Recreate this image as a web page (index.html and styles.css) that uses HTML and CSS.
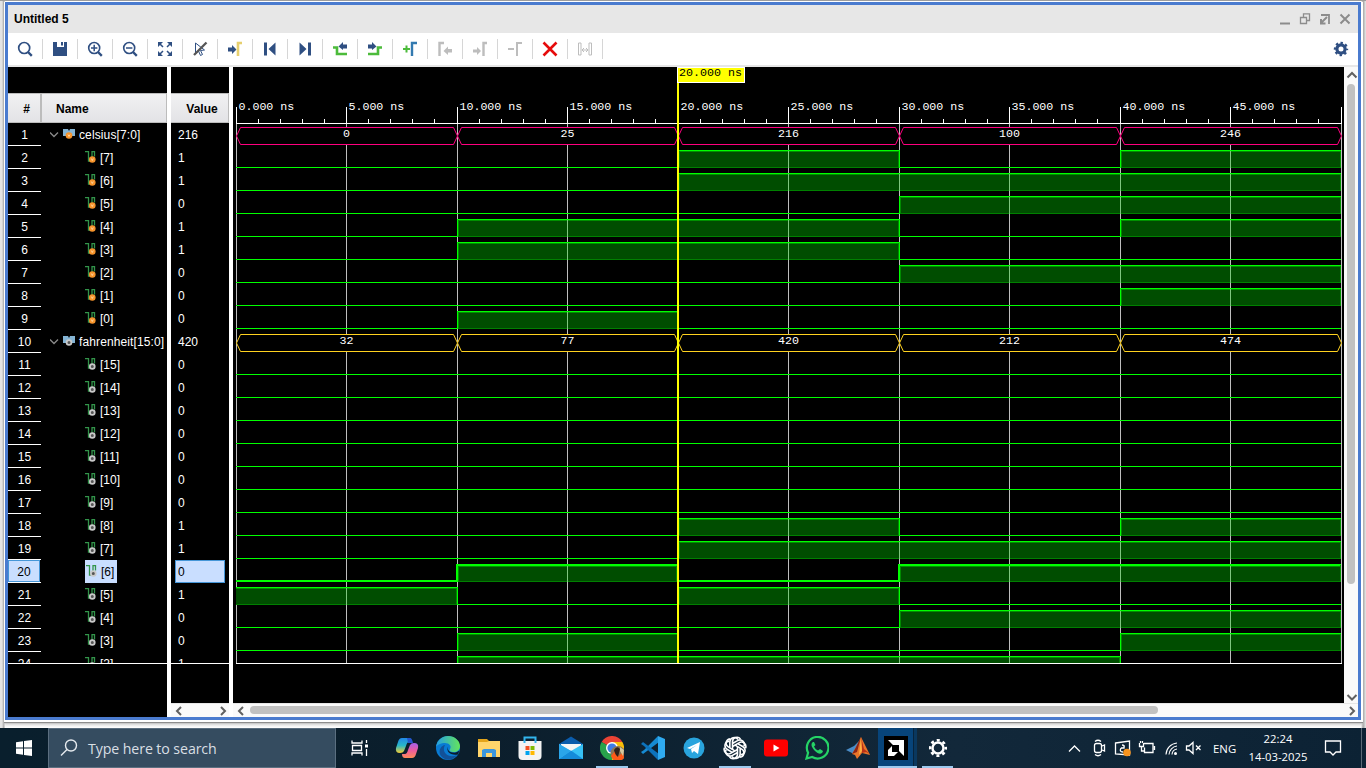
FILE: index.html
```html
<!DOCTYPE html>
<html lang="en">
<head>
<meta charset="utf-8">
<title>Untitled 5</title>
<link rel="stylesheet" href="styles.css">
</head>
<body>
<div class="desktop">
<div class="shell">
<main class="window">
  <header class="titlebar">
    <span class="title">Untitled 5</span>
    <svg class="winbtns" width="73" height="16" fill="none" stroke="#8c8c8c" stroke-width="1.6">
      <path d="M1 12.500h10" stroke-width="2"/>
      <path d="M21.500 6.500h6v6h-6zM24.500 6v-3.200h6v6.700h-3" stroke-width="1.300"/>
      <path d="M42 4h8v9" stroke-width="1.800"/><path d="M48 6l-5.500 5.500M42 8v4.500h4.500" stroke-width="2"/>
      <path d="M61.500 3.500l9 9M70.500 3.500l-9 9" stroke-width="2"/>
    </svg>
  </header>
  <nav class="toolbar">
    <span class="tool"><svg viewBox="0 0 16 16" fill="none" stroke="#2f4f82"><circle cx="7.200" cy="7" r="5.500" stroke-width="1.700"/><path d="M11 11l3.800 3.800" stroke-width="2.400"/></svg></span>
    <span class="tool"><svg viewBox="0 0 16 16" fill="#2f4f82"><path d="M1 1h4v5h7V1h3v14H1zM9 1h2v3.500H9z"/></svg></span>
    <span class="tool"><svg viewBox="0 0 16 16" fill="none" stroke="#2f4f82"><circle cx="7.200" cy="7" r="5.500" stroke-width="1.600"/><path d="M11 11l3.800 3.800" stroke-width="2.400"/><path d="M4 7h6.400M7.200 3.800v6.400" stroke-width="1.500"/></svg></span>
    <span class="tool"><svg viewBox="0 0 16 16" fill="none" stroke="#2f4f82"><circle cx="7.200" cy="7" r="5.500" stroke-width="1.600"/><path d="M11 11l3.800 3.800" stroke-width="2.400"/><path d="M4 7h6.400" stroke-width="1.500"/></svg></span>
    <span class="tool"><svg viewBox="0 0 16 16" fill="#2f4f82" stroke="#2f4f82"><path d="M2.500 2.500l3.500 3.500M13.500 2.500L10 6M2.500 13.500L6 10M13.500 13.500L10 10" stroke-width="1.500"/><path stroke="none" d="M1 1h5L1 6zM15 1h-5l5 5zM1 15h5l-5-5zM15 15h-5l5-5z"/></svg></span>
    <span class="tool"><svg viewBox="0 0 16 16" fill="none"><path d="M3.500 2v10.500l3-2.500 2 4.500 2-1-2-4 4-.5z" stroke="#2f4f82"/><path d="M14.500 1.500L2 14" stroke="#555" stroke-width="2.300"/></svg></span>
    <span class="tool"><svg viewBox="0 0 16 16"><path d="M1 6.500h4V4l4.500 4.500L5 13v-2.500H1z" fill="#2f4f82"/><path d="M15 2h-4v13" fill="none" stroke="#e6cf6e" stroke-width="2.600"/></svg></span>
    <span class="tool"><svg viewBox="0 0 16 16" fill="#2f4f82"><path d="M2 1.500h3v13H2zM13.500 1.500v13L6.500 8z"/></svg></span>
    <span class="tool"><svg viewBox="0 0 16 16" fill="#2f4f82"><path d="M11 1.500h3v13h-3zM2.500 1.500v13L9.500 8z"/></svg></span>
    <span class="tool"><svg viewBox="0 0 16 16"><path d="M1 6.500h4V13h10" fill="none" stroke="#4cbb3b" stroke-width="2.600"/><path d="M15 3.500h-4V1L6.500 5.500 11 9V7.500h4z" fill="#2f4f82"/></svg></span>
    <span class="tool"><svg viewBox="0 0 16 16"><path d="M15 6.500h-4V13H1" fill="none" stroke="#4cbb3b" stroke-width="2.600"/><path d="M1 3.500h4V1l4.500 4.500L5 9V7.500H1z" fill="#2f4f82"/></svg></span>
    <span class="tool"><svg viewBox="0 0 16 16" fill="none"><path d="M1 8h7M4.500 4.500v7" stroke="#4cbb3b" stroke-width="2"/><path d="M15 2h-5v13" stroke="#337ab0" stroke-width="2.400"/></svg></span>
    <span class="tool"><svg viewBox="0 0 16 16"><path d="M7 2H2.500v13" fill="none" stroke="#bdbdbd" stroke-width="2.400"/><path d="M15 8h-4V5.500L6.500 10l4.500 4v-2.500h4z" fill="#bdbdbd"/></svg></span>
    <span class="tool"><svg viewBox="0 0 16 16"><path d="M15 2h-3.500v13" fill="none" stroke="#bdbdbd" stroke-width="2.400"/><path d="M1 8.500h4V6l4 4-4 4v-2.500H1z" fill="#bdbdbd"/></svg></span>
    <span class="tool"><svg viewBox="0 0 16 16" fill="none" stroke="#bdbdbd" stroke-width="2"><path d="M1 8h6M15 2h-5v13"/></svg></span>
    <span class="tool"><svg viewBox="0 0 16 16" stroke="#e60b0b" stroke-width="2.600"><path d="M1.500 1.500l13 13M14.500 1.500l-13 13"/></svg></span>
    <span class="tool"><svg viewBox="0 0 16 16" fill="none" stroke="#bdbdbd"><path d="M1.500 2h2.500v12H1.500zM12 2h2.500v12H12zM5 9h6M7 7L5 9l2 2M9 7l2 2-2 2"/></svg></span>
    <svg class="gear" viewBox="0 0 16 16" fill="none" stroke="#2f4f82"><circle cx="8" cy="8" r="4.100" stroke-width="3.200"/><circle cx="8" cy="8" r="6" stroke-width="2.400" stroke-dasharray="2.350 2.360" stroke-dashoffset="1.200"/></svg>
  </nav>
  <section class="viewer">
    <div class="panel names">
      <div class="spacer"></div>
      <div class="heads"><b class="head idx">#</b><b class="head name">Name</b></div>
      <div class="rows" id="nameRows"></div>
    </div>
    <div class="panel values">
      <div class="spacer"></div>
      <div class="heads"><b class="head val">Value</b></div>
      <div class="rows" id="valueRows"></div>
      <div class="hbar"><svg width="58" height="13" fill="none" stroke="#606060" stroke-width="2"><path d="M10 3L6 7l4 4M50 3l4 4-4 4"/></svg></div>
    </div>
    <div class="wavecol">
      <svg class="wave" id="wave" width="1111" height="636" viewBox="233 67 1111 636"></svg>
      <div class="hbar"><svg width="1125" height="13"><rect x="17" y="2" width="908" height="8" rx="4" fill="#c1c1c1"/><path d="M10 3L6 7l4 4M1117 3l4 4-4 4" fill="none" stroke="#606060" stroke-width="2"/></svg></div>
    </div>
    <div class="vbar"><svg width="14" height="636"><rect x="3" y="17" width="8" height="500" rx="4" fill="#c1c1c1"/><path d="M3.500 10.500l4.500-4.500 4.500 4.500M3.500 628l4.500 4.500 4.500-4.500" fill="none" stroke="#606060" stroke-width="2"/></svg></div>
  </section>
</main>
</div>
<footer class="taskbar">
  <span class="start"><svg width="16" height="16" fill="#fff"><path d="M0 2.200L7 1.200V7.500H0zM8 1L16 0v7.500H8zM0 8.500h7v6.300L0 13.800zM8 8.500h8V16l-8-1z"/></svg></span>
  <div class="search"><svg width="18" height="18" fill="none" stroke="#e6eaee" stroke-width="1.400"><circle cx="11" cy="6.500" r="5.500"/><path d="M7 10.500L1 16.500"/></svg><span>Type here to search</span></div>
  <div class="apps">
    <span class="app taskview"><svg viewBox="0 0 24 24" fill="none" stroke="#fff" stroke-width="1.300"><path d="M4 4.500V7h10V4.500M4 19.500V17h10v2.500M4.500 9.500h9v5h-9zM18.500 4v3M18.500 13v7"/><path d="M17 8.500h3v3h-3z" fill="#fff" stroke="none"/></svg></span>
    <span class="app"><svg viewBox="0 0 24 24"><defs><linearGradient id="cpa" x2="0" y2="1"><stop stop-color="#2187e8"/><stop offset=".5" stop-color="#28b6c8"/><stop offset="1" stop-color="#f5ce32"/></linearGradient><linearGradient id="cpb" x2="0" y2="1"><stop stop-color="#a560ed"/><stop offset=".5" stop-color="#ec5b9d"/><stop offset="1" stop-color="#ff8a56"/></linearGradient></defs><path d="M7 2h7q2 0 3 4h-3q-2 0-3 4l-2 5q-1 2-4 2-5 0-4-5l2-6q1-4 4-4z" fill="url(#cpa)"/><path d="M12 2h3q2 0 3 5h-5z" fill="#2356ce"/><path d="M17 22h-7q-3 0-3-4h3q2 0 3-4l2-5q1-2 4-2 5 0 4 5l-2 6q-1 4-4 4z" fill="url(#cpb)"/></svg></span>
    <span class="app"><svg viewBox="0 0 24 24"><defs><linearGradient id="edg"><stop stop-color="#249ee5"/><stop offset="1" stop-color="#64e55b"/></linearGradient></defs><circle cx="12" cy="12" r="12" fill="#087bd3"/><path d="M0 11C1 4 6 0 12 0c7 0 12 5 12 10 0 4-3 6-6 6-4 0-5-1-4-3 2-3-1-6-5-6-4 0-8 2-9 4z" fill="url(#edg)"/><path d="M9 9c-4 7 3 14 12 10-4 6-12 6-16 1-3-4-1-10 4-11z" fill="#125198"/><path d="M12.500 10c-1.500 3 0 6 4 6.500 3 .5 5-.5 7-2l-1.500 4c-7 1.500-13-3-9.500-8.500z" fill="#0a1d2d"/></svg></span>
    <span class="app"><svg viewBox="0 0 24 24"><path d="M1 3h9l2 2h11v16H1z" fill="#e4a51b"/><path d="M1 6h9l2-1h11v16H1z" fill="#ffd56b"/><path d="M5 21v-7l2-1h10l2 1v7h-4v-4H9v4z" fill="#3a96dd"/></svg></span>
    <span class="app"><svg viewBox="0 0 24 24"><path d="M6.500 6V1.500h11V6" fill="none" stroke="#32b5ed" stroke-width="2"/><path d="M.5 5h23v15q0 4-4 4h-15q-4 0-4-4z" fill="#f3f3f3"/><path d="M6.500 5v2M17.500 5v2" stroke="#32b5ed" stroke-width="2"/><path d="M7.500 10h4v4h-4z" fill="#f25022"/><path d="M12.500 10h4v4h-4z" fill="#7fba00"/><path d="M7.500 15h4v4h-4z" fill="#00a4ef"/><path d="M12.500 15h4v4h-4z" fill="#ffb900"/></svg></span>
    <span class="app"><svg viewBox="0 0 24 24"><path d="M0 8L12 .5 24 8v8H0z" fill="#0b5cac"/><path d="M2 8h20v8H2z" fill="#f5f5f5"/><path d="M0 8l12 7 12-7v15H0z" fill="#37c1f5"/><path d="M0 23l12-8.500L24 23z" fill="#158bd9"/><path d="M0 8l12 7L0 23z" fill="#2aa5ea"/></svg></span>
    <span class="app open"><svg viewBox="0 0 24 24"><path d="M12 12L1.600 6A12 12 0 0 1 22.400 6z" fill="#ea4335"/><path d="M12 12L1.600 6A12 12 0 0 0 12 24l5-9z" fill="#28a34b"/><path d="M12 12V6h10.400A12 12 0 0 1 12 24z" fill="#fbbd08"/><circle cx="12" cy="12" r="6" fill="#fff"/><circle cx="12" cy="12" r="4.600" fill="#3f7be5"/><circle cx="18" cy="17.500" r="7.500" fill="#8d7554"/><path d="M11 20l4-5 4 5 4-4 1 6q-6 6-12 0z" fill="#ff5a18"/><path d="M14 14q3-5 6-1l-2 8q-3-2-4-7z" fill="#30201b"/><path d="M20 11l4 3-1 6-3-5z" fill="#d5c89e"/></svg></span>
    <span class="app"><svg viewBox="0 0 24 24"><path d="M17 0L3 14 0 16l2 2L18 6z" fill="#168bd3"/><path d="M17 24L3 10 0 8l2-2 16 12z" fill="#0d73bc"/><path d="M17 0l7 3v18l-7 3z" fill="#2faaf0"/></svg></span>
    <span class="app"><svg viewBox="0 0 24 24"><circle cx="12" cy="12" r="10.500" fill="#29a4dd"/><path d="M5 12l13-6-2 12-4-3-2 2-1-4 6-4-7 4z" fill="#fff"/></svg></span>
    <span class="app open"><svg viewBox="0 0 24 24" fill="none" stroke="#fff" stroke-width="1.600"><g id="knot"><path id="petal" d="M9.500 7.500l5-2.900a4.500 4.500 0 0 1 6.400 5.800M9.500 13.400V6a4.500 4.500 0 0 1 8-3"/><use href="#petal" transform="rotate(60 12 12)"/><use href="#petal" transform="rotate(120 12 12)"/></g><use href="#knot" transform="rotate(180 12 12)"/></svg></span>
    <span class="app"><svg viewBox="0 0 24 24"><rect y="3.500" width="24" height="17" rx="3" fill="#f00"/><path d="M9.500 8.500v7l6-3.500z" fill="#fff"/></svg></span>
    <span class="app"><svg viewBox="0 0 24 24"><path d="M1.500 22.500l1.600-5.800A10.800 10.800 0 1 1 7.200 21z" fill="none" stroke="#25d366" stroke-width="2.200"/><path d="M8 6c-3 2-1 6 2 9 3 3 7 4 8 0l-3-2-2 1.500c-2-1-3-2-4-4L10.500 9 9 6z" fill="#25d366"/></svg></span>
    <span class="app matlab"><svg viewBox="0 0 24 24"><path d="M0 14l8-4 5-5-5 13z" fill="#4a8cc7"/><path d="M15 1l-5 10-4 7 3 1 2 4 5-6 8 2z" fill="#e8752a"/><path d="M15 1l-6 12-3 5 5-2z" fill="#8d2516"/><path d="M15 1l3 12 6 5-4-2-4 1z" fill="#b93218"/><path d="M15 1l1 14-3 4z" fill="#ffb343"/></svg></span>
    <span class="app amd"><svg viewBox="0 0 24 24"><path d="M0 0h24v24H0z" fill="#000"/><path d="M4 4h16v16l-5-5V9H9zM4 14l4-4v6h6l-4 4H4z" fill="#fff"/></svg></span>
    <span class="app open settings"><svg viewBox="0 0 24 24" fill="none" stroke="#fff"><circle cx="12" cy="12" r="5.500" stroke-width="2.500"/><circle cx="12" cy="12" r="7.800" stroke-width="2.500" stroke-dasharray="3.050 3.076" stroke-dashoffset="1.500"/></svg></span>
  </div>
  <div class="tray">
    <svg width="147" height="40" fill="none" stroke="#fff" stroke-width="1.300"><path d="M3 23.500l5.500-5.500 5.500 5.500"/><path d="M28.500 17.500q0-2 2-2h3q2 0 2 2v5q0 2-2 2h-3q-2 0-2-2zM36 18l2.500-1v6L36 22M29 13.500q3-2.500 6 0M29 26.500q3 2.500 6 0"/><path d="M49.500 15l14-2v14l-14-1zM56 17q3 0 2 3m-1 4q-4 0-2-4m3-3v3h-3"/><circle cx="61" cy="24.500" r="3.800" fill="#f7931e" stroke="none"/><path d="M78 15.500h9v9h-8.500v-5M88.500 18v4M73.500 15v3.500h4V15M75.500 18.500V23h3M74.500 13v2M76.500 13v2"/><path d="M100 26.500a12 12 0 0 1 11-11.500M103 26.500a9 9 0 0 1 8-8.500M106 26.500a6 6 0 0 1 5-5.500" stroke-width="1.100"/><circle cx="109.500" cy="25.500" r="1.500" fill="#fff" stroke="none"/><path d="M120.500 18v4h2.500l4 3.500v-11L123 18zM130 17.500l4.500 4.500M134.500 17.500L130 22"/></svg>
    <span class="lang">ENG</span>
    <span class="clock"><span>22:24</span><span>14-03-2025</span></span>
    <svg class="note" width="18" height="18" fill="none" stroke="#fff" stroke-width="1.300"><path d="M1.500 2h15v11H12L9 16l-3-3H1.500z"/></svg>
    <span class="peek"></span>
  </div>
</footer>
</div>
<script src="wave.js"></script>
</body>
</html>
```

FILE: styles.css
```css
* { box-sizing: border-box; }
body { margin: 0; width: 1366px; height: 768px; overflow: hidden; font-family: "Liberation Sans", Arial, sans-serif; font-size: 12px; }
svg { display: block; flex: none; }
.desktop { display: flex; flex-direction: column; height: 768px; background: #fff; }
.shell { height: 728px; padding: 1px 3px 6px 4px; background: linear-gradient(90deg, #e4e4e4 0, #e4e4e4 2px, #a0a0a0 4px, #fff 5px, #fff 1361px, #a0a0a0 1363px, #ececec 1366px); border-top: 1px solid #9d9d9d; }
.window { display: flex; flex-direction: column; height: 720px; width: 1359px; padding: 0 1px 2px 0; background: #fff; box-shadow: 0 1px 1px #8d8d8d, 0 3px 3px #cfcfcf; }
.titlebar, .toolbar, .viewer { width: 1356px; margin-left: 1px; border: solid #4a7bcf; border-width: 0 3px; }
.titlebar { height: 31px; border-top-width: 3px; background: #e7e7e7; display: flex; align-items: center; justify-content: space-between; padding: 0 6px; }
.title { font-weight: bold; }
.toolbar { height: 34px; padding-bottom: 2px; background: linear-gradient(#fff 32px, #e7e7e7 32px); display: flex; align-items: center; }
.tool { width: 35px; height: 20px; border-right: 1px solid #d6d6d6; display: flex; align-items: center; justify-content: center; }
.tool svg, .gear { width: 16px; height: 16px; }
.gear { margin-left: auto; margin-right: 9px; }
.viewer { height: 653px; border-bottom: 3px solid #4a7bcf; display: flex; background: #fff; }
.panel { background: #000; color: #fff; display: flex; flex-direction: column; height: 650px; }
.names { width: 159px; margin-right: 4px; }
.values { width: 58px; margin-right: 4px; }
.spacer { height: 26px; }
.heads { display: flex; height: 30px; color: #000; }
.head { height: 30px; line-height: 30px; background: linear-gradient(#f1f1f2, #e3e3e6); border: solid #bcbcbc; border-width: 1px 1px 1px 0; }
.idx { width: 34px; text-align: center; padding-left: 5px; border-right-width: 2px; }
.name { width: 125px; padding-left: 14px; }
.val { width: 58px; text-align: center; padding-left: 5px; }
.rows { height: 541px; overflow: hidden; border-bottom: 1px solid #fff; }
.row { display: flex; height: 23px; line-height: 25px; }
.num { width: 33px; height: 23px; text-align: center; border-bottom: 1px solid #fff; }
.num span { display: block; height: 22px; width: 33px; }
.cell { display: flex; align-items: flex-start; white-space: nowrap; }
.bus { padding-left: 9px; letter-spacing: .12px; }
.bus svg { margin-right: 4px; }
.bit { padding: 0 3px 0 2px; margin-left: 42px; height: 23px; }
.bit svg { margin: 4px 4px 0 0; }
.value { padding-left: 7px; }
.row.sel .num span { background: #c9deff; color: #000; border: 1px solid #4596d8; line-height: 23px; width: 32px; }
.sel .bit { background: #c9deff; margin-left: 44px; padding-left: 1px; color: #000; }
.sel .bit svg { margin-right: 4px; }
.row.sel .value { margin: 0 4px; width: 50px; padding-left: 2px; background: #c9deff; color: #000; border: 1px solid #4596d8; line-height: 23px; }
.values .hbar { margin-top: auto; }
.hbar { height: 14px; background: #fafafa; border-top: 1px solid #e6e6e6; }
.wavecol { width: 1111px; }
.wavecol .hbar { width: 1125px; }
.wave { background: #000; }
.vbar { width: 14px; height: 636px; background: #fafafa; }
.mono { font-family: "Liberation Mono", monospace; font-size: 11.670px; fill: #fff; }
.stamp { fill: #000; }
.taskbar { height: 40px; display: flex; background: linear-gradient(90deg, #091f2d, #0b1e2c 35%, #12283a 70%, #0c2234); color: #fff; font-family: "Open Sans", "Noto Sans", sans-serif; }
.start { width: 48px; display: flex; align-items: center; justify-content: center; }
.search { width: 288px; border: 1px solid #5b6f80; background: #354c60; display: flex; align-items: center; gap: 10px; padding-left: 11px; font-size: 14.200px; color: #d9dfe4; letter-spacing: -.1px; }
.apps { display: flex; }
.app { width: 32px; height: 40px; margin-right: 9px; display: flex; align-items: center; justify-content: center; border-bottom: 2px solid transparent; padding-top: 2px; }
.taskview { width: 48px; margin-right: 7px; }
.app svg { width: 24px; height: 24px; }
.open { border-bottom-color: #9cc9ee; }
.matlab { margin-right: 4px; }
.amd { width: 39px; margin-right: 5px; justify-content: flex-start; padding-left: 6px; background: linear-gradient(90deg, #07447a 35px, #07243d 35px, #07243d 36px, #0a385f 36px); border-bottom-color: #9cc9ee; }
.settings { width: 31px; margin-right: 0; }
.tray { margin-left: auto; display: flex; align-items: center; }
.lang { width: 24px; font-size: 11.400px; }
.clock { width: 82px; display: flex; flex-direction: column; align-items: center; font-size: 11.300px; line-height: 18px; padding-bottom: 1px; }
.note { margin: 0 19px 0 5px; }
.peek { width: 5px; height: 40px; border-left: 1px solid #5a6a77; }
```

FILE: wave.js
```js
const edges = [236, 457, 678, 899, 1120, 1341];
const buses = [
  { name: 'celsius', width: 8, values: [0, 25, 216, 100, 246], color: '#ff007f', dot: '#f7942b' },
  { name: 'fahrenheit', width: 16, values: [32, 77, 420, 212, 474], color: '#ffd21f', dot: '#c9c9c9' }
];
const rows = [];
for (const bus of buses) {
  rows.push({ bus, label: `${bus.name}[${bus.width - 1}:0]`, value: bus.values[2] });
  for (let b = bus.width - 1; b >= 0; b--) {
    const bits = bus.values.map(v => (v >> b) & 1);
    rows.push({ bits, dot: bus.dot, label: `[${b}]`, value: bits[2] });
  }
}
const shown = rows.slice(0, 24);

const mark = (x, y, c) => c === '#f7942b'
  ? `<circle cx="${x}" cy="${y}" r="3.300" fill="${c}"/><path d="M${x - 1} ${y - 1}l1 2 1-2" fill="none" stroke="#ffe0b5" stroke-width=".8"/>`
  : `<circle cx="${x}" cy="${y}" r="2.400" fill="#555" stroke="${c}" stroke-width="1.800"/>`;
const busIcon = c => `<svg width="25" height="23"><path d="M0 9.500l4 4 4-4" fill="none" stroke="#8a8a8a" stroke-width="1.300"/><path d="M13 6h5l1 2 1-2h5v7h-3l-3 2-3-2h-3z" fill="#84b4d4"/>${mark(19, 12.500, c)}</svg>`;
const bitIcon = c => `<svg width="11" height="15"><path d="M0 1.600h3.500v9.400h3.500V1.600h2.500v5" fill="none" stroke="#32944a" stroke-width="1.300"/>${mark(7.300, 9.500, c)}</svg>`;

document.getElementById('nameRows').innerHTML = shown.map((r, i) =>
  `<div class="row${i === 19 ? ' sel' : ''}"><div class="num"><span>${i + 1}</span></div>` +
  `<div class="cell ${r.bus ? 'bus' : 'bit'}">${r.bus ? busIcon(r.bus.dot) : bitIcon(r.dot)}<span>${r.label}</span></div></div>`).join('');
document.getElementById('valueRows').innerHTML = shown.map((r, i) =>
  `<div class="row${i === 19 ? ' sel' : ''}"><div class="value">${r.value}</div></div>`).join('');

const rect = (x, y, w, h, f) => `<rect x="${x}" y="${y}" width="${w}" height="${h}" fill="${f}"/>`;
let s = '';
const majors = [236, 346, 457, 567, 678, 788, 899, 1009, 1120, 1230, 1341];
majors.forEach(x => { s += rect(x, 124, 1, 540, '#bebebe'); });
s += '<clipPath id="body"><rect x="233" y="60" width="1111" height="603"/></clipPath><g clip-path="url(#body)">';
shown.forEach((r, i) => {
  const top = 127 + 23 * i;
  if (r.bus) {
    r.bus.values.forEach((v, k) => {
      const a = edges[k] + .5, b = edges[k + 1] + .5, y = top + .5;
      s += `<path d="M${a} ${y + 8.5}L${a + 4} ${y}H${b - 4}L${b} ${y + 8.5}L${b - 4} ${y + 17}H${a + 4}Z" fill="#000" stroke="${r.bus.color}"/>`;
      s += `<text class="mono" text-anchor="middle" x="${(a + b) / 2 - .5}" y="${top + 10}">${v}</text>`;
    });
    return;
  }
  const t = i === 19 ? 2 : 1;
  r.bits.forEach((v, k) => {
    const a = edges[k], w = edges[k + 1] - a;
    if (v) {
      s += rect(a, top, w, 18, '#004d00') + rect(a, top + 17, w, 1, '#008000') + rect(a, top + t, w, 1, '#009000');
      majors.filter(x => x > a && x < a + w || (x === a && k && r.bits[k - 1])).forEach(x => { s += rect(x, top + 1, 1, 17, '#7fc67f'); });
      s += rect(a, top, w, t, '#00ff00');
      if (k === 4) s += rect(a + w - 1, top + 1, 1, 17, '#009000');
    } else {
      s += rect(a, top + 18 - t, w, t, '#00ff00');
    }
    if (k && r.bits[k - 1] !== v) {
      s += rect(a - t + 1, top, t, 18, '#00ff00') + rect(v ? a + 1 : a - t, top + t, 1, 17 - t, '#008a00');
    }
  });
});
s += '</g>';
s += rect(236, 123, 1106, 1, '#fff') + rect(236, 663, 1106, 1, '#fff');
majors.forEach((x, i) => {
  s += rect(x, 107, 1, 17, '#fff');
  if (i < 10) {
    for (let m = 1; m < 5; m++) s += rect(x + 22 * m, 119, 1, 4, '#fff');
    s += `<text class="mono" x="${x + 2.4}" y="110">${i * 5}.000 ns</text>`;
  }
});
s += rect(677, 67, 2, 596, '#ff0') + rect(677, 67, 68, 16, '#fff') + rect(678, 68, 66, 14, '#ff0');
s += '<text class="mono stamp" x="679" y="76">20.000 ns</text>';
document.getElementById('wave').innerHTML = s;
```
